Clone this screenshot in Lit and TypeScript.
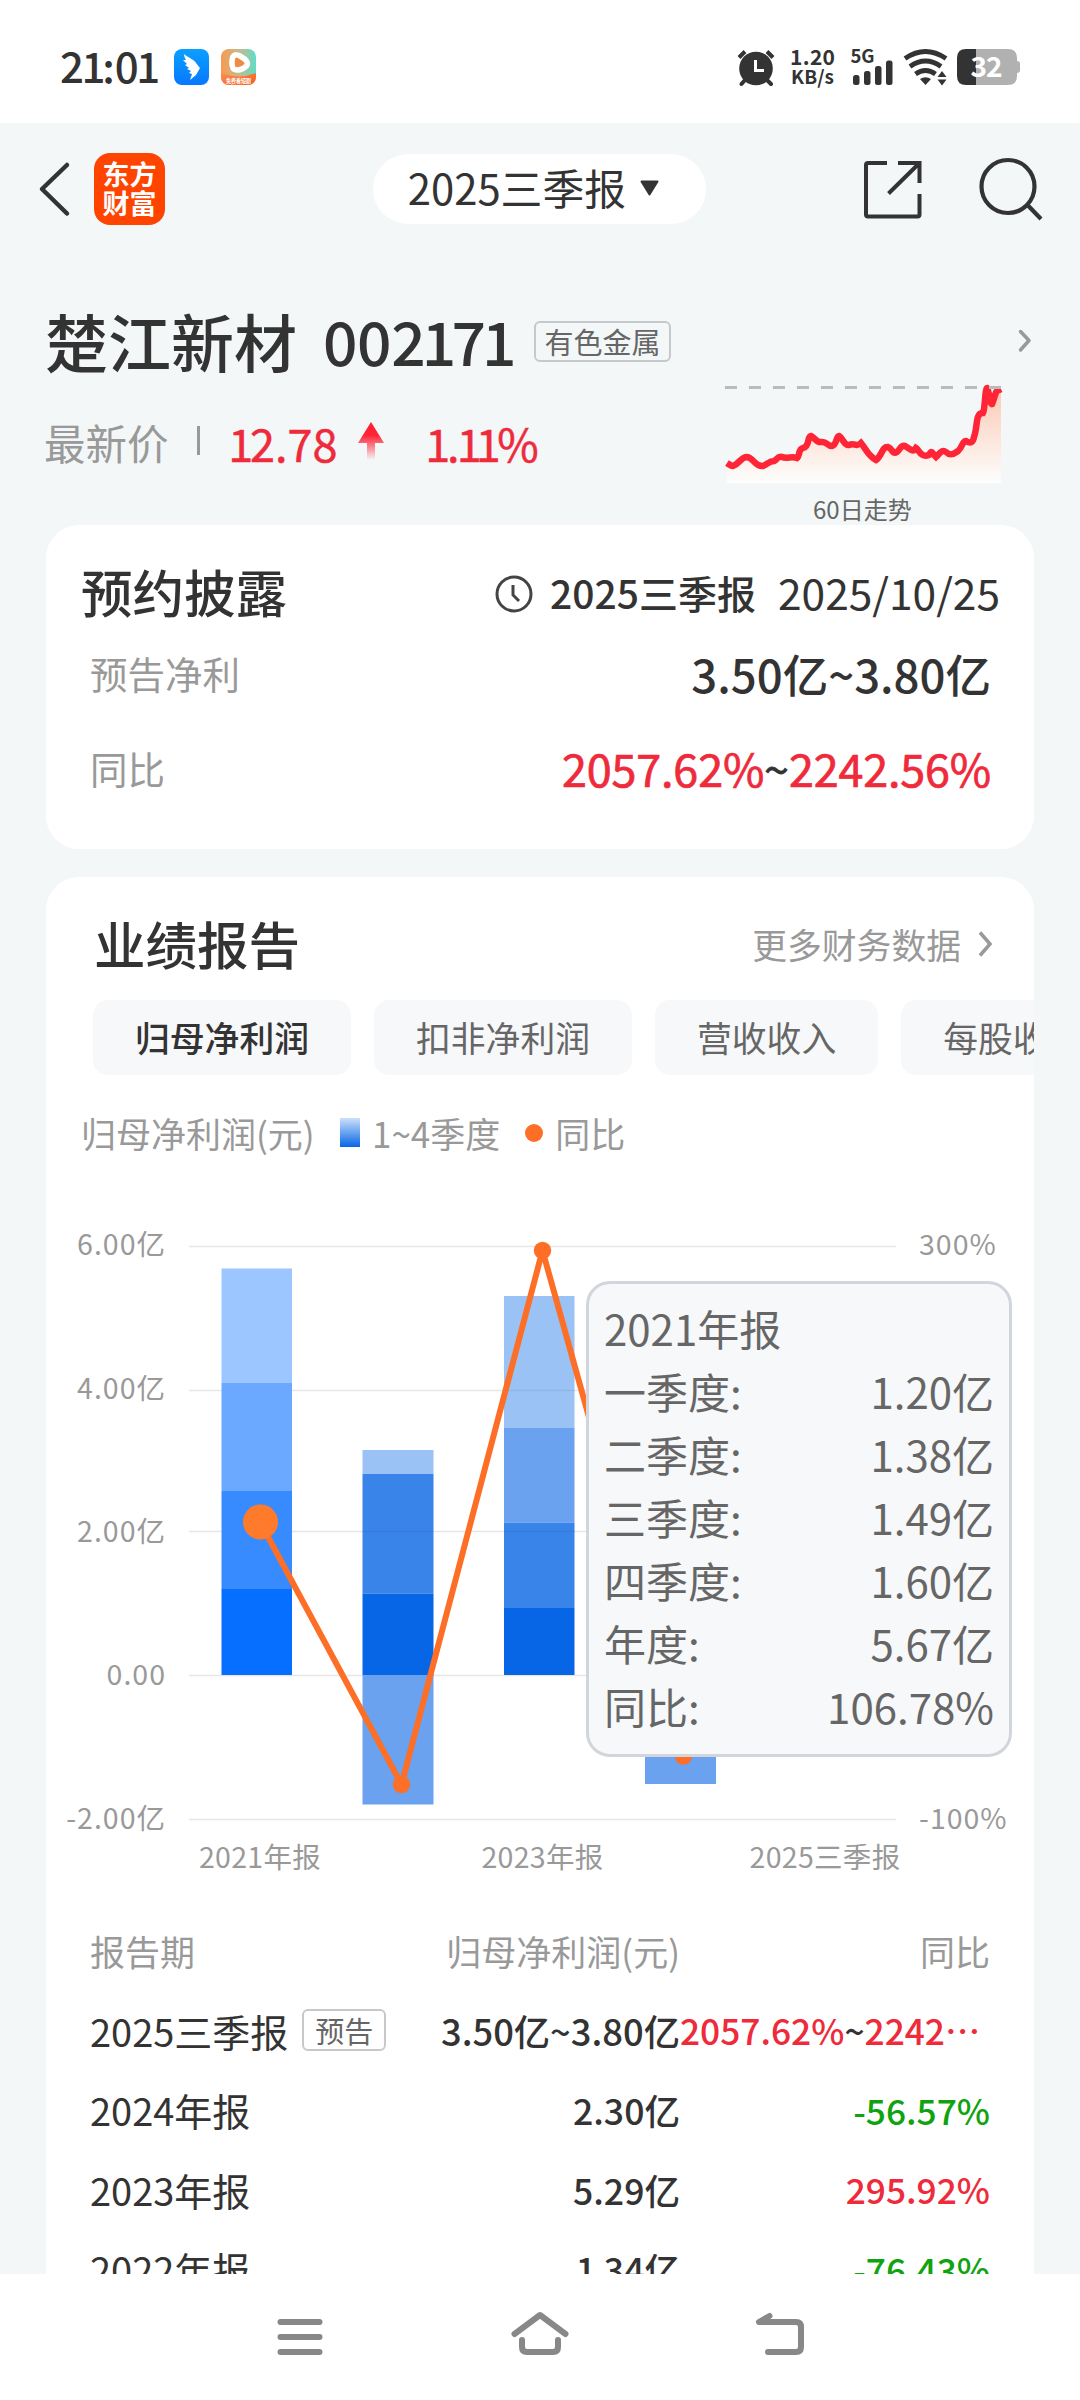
import { LitElement, html, css, svg } from "lit";
import { customElement } from "lit/decorators.js";

interface Bar { x: number; w: number; segs: [number, number, string][]; }

const bars: Bar[] = [
  { x: 221.5, w: 70.5, segs: [[1268.5, 1383, "#9cc6ff"], [1383, 1491, "#6aa9ff"], [1491, 1589, "#388bff"], [1589, 1675, "#076fff"]] },
  { x: 362.5, w: 71, segs: [[1450, 1474, "#9bc2f5"], [1474, 1593.5, "#3984e9"], [1593.5, 1675, "#0766e6"], [1675, 1804.5, "#6aa2ef"]] },
  { x: 504, w: 70.5, segs: [[1296, 1428, "#9bc2f5"], [1428, 1522.5, "#6aa2ef"], [1522.5, 1608, "#3984e9"], [1608, 1675, "#0766e6"]] },
  { x: 645, w: 71, segs: [[1675, 1784, "#6aa2ef"]] },
];
const grid = [1246.5, 1390.5, 1531.5, 1675.5, 1819.5];
const leftAxis = [["6.00亿", 1255], ["4.00亿", 1398.5], ["2.00亿", 1542], ["0.00", 1685], ["-2.00亿", 1828.5]] as const;
const quarters = [
  ["一季度:", "1.20亿"], ["二季度:", "1.38亿"], ["三季度:", "1.49亿"],
  ["四季度:", "1.60亿"], ["年度:", "5.67亿"], ["同比:", "106.78%"],
];
const rows = [
  ["2024年报", "2.30亿", "-56.57%", "down"],
  ["2023年报", "5.29亿", "295.92%", "up"],
  ["2022年报", "1.34亿", "-76.43%", "down"],
];

// Sets the digit 1 on a narrower advance than the other figures.
const fig = (s: string) => [...s].map(c => (c === "1" ? html`<span class="one">1</span>` : c));

@customElement("app-root")
export class AppRoot extends LitElement {
  static styles = css`
    :host { display: block; width: 1080px; height: 2400px; overflow: hidden; background: #f3f7f8; color: #333;
      font-family: "Noto Sans CJK SC", sans-serif; }
    * { box-sizing: border-box; }
    svg { display: block; flex: none; overflow: visible; }
    .page { display: flex; flex-direction: column; height: 2400px; }
    .up { color: #ee2a3b; }
    .down { color: #0fa30f; }
    .one { letter-spacing: -.075em; margin-left: -.06em; }
    .status { height: 123px; background: #fff; display: flex; align-items: center; padding: 11px 60px 0 60px; flex: none; }
    .time { font-size: 42px; font-weight: 500; line-height: 60px; width: 114px; white-space: nowrap; margin-top: -5px; }
    .grow { flex: 1; }
    .nav { height: 132px; display: flex; align-items: center; flex: none; padding: 0 36px 0 38px; }
    .logo { width: 71px; height: 72px; margin-left: 24px; border-radius: 16px; background: #ff4400; color: #fff; font-weight: 700;
      font-size: 27px; line-height: 29px; text-align: center; padding-top: 6px; }
    .pill { margin-left: 208px; width: 334px; height: 70px; border-radius: 35px; background: #fff; display: flex; align-items: center;
      padding-left: 35px; font-size: 41.8px; line-height: 66px; white-space: nowrap; }
    .pill span { margin-top: -4px; }
    .pill svg { margin-left: 14px; }
    .share { margin: 2px 0 0 157px; }
    .search { margin: 2px 0 0 57px; }
    .stock { height: 270px; flex: none; display: flex; padding: 0 48px 0 45px; justify-content: space-between; }
    .name { display: flex; align-items: center; height: 84px; margin-top: 42px; font-size: 63px; font-weight: 500; white-space: nowrap; }
    .code { margin-left: 26px; font-size: 60.5px; letter-spacing: -.4px; margin-top: 1px; }
    .tag { border: 2px solid #c6c9cb; border-radius: 6px; color: #666; font-weight: 400; display: flex; align-items: center; justify-content: center; }
    .industry { font-size: 29px; line-height: 36px; width: 137px; height: 41px; margin-left: auto; margin-top: 4px; }
    .ident { width: 626px; }
    .price { display: flex; align-items: center; height: 66px; margin-top: 28px; font-size: 45px; white-space: nowrap; }
    .price .up { -webkit-text-stroke: .5px #ee2a3b; }
    .plabel { font-size: 41.5px; color: #999; width: 153px; margin-left: -1px; }
    .pbar { width: 3px; height: 29px; background: #999; margin-right: 31px; margin-top: -3px; }
    .pv { width: 127px; }
    .pc { margin-left: 44px; }
    .trend { display: flex; flex-direction: column; align-items: flex-end; }
    .more { margin-top: 73px; }
    .spark { margin: 28px 30px 0 0; }
    .tl { font-size: 24px; line-height: 30px; color: #666; width: 100px; margin: 8px 119px 0 0; white-space: nowrap; }
    .card { background: #fff; width: 988px; margin-left: 46px; flex: none; }
    .book { height: 324px; border-radius: 33px; padding: 30px 34px 0 35px; }
    .line { display: flex; align-items: center; white-space: nowrap; }
    .line > span { margin-top: -5px; }
    .bh { height: 78px; }
    .line > .h { font-size: 51.5px; font-weight: 500; margin-top: -8px; }
    .period { font-size: 39px; margin: 0 22px 0 17px; font-weight: 500; }
    .date { font-size: 42.5px; }
    .k { font-size: 37.5px; color: #999; }
    .v { font-size: 45.5px; font-weight: 500; }
    .r1 { height: 84px; padding: 0 9px; }
    .r2 { height: 105px; padding: 0 9px 0 9px; }
    .r2 .v { font-size: 44.9px; font-weight: 400; letter-spacing: -.15px; -webkit-text-stroke: .7px currentColor; }
    .dark { color: #333; }
    .report { margin-top: 28px; height: 1397px; border-radius: 33px 33px 0 0; overflow: hidden; position: relative; }
    .rh { height: 123px; padding: 16px 41px 0 48px; }
    .link { font-size: 34.8px; color: #999; margin-right: 16px; }
    .rh svg { margin-top: -5px; }
    .tabs { display: flex; margin-left: 47px; gap: 23px; height: 75px; width: 1100px; }
    .tab { background: #f7f8fa; border-radius: 15px; padding: 0 42px; font-size: 34.8px; line-height: 75px; color: #666; white-space: nowrap; flex: none; }
    .on { color: #333; font-weight: 500; }
    .legend { height: 60px; margin-top: 27px; padding-left: 35px; font-size: 35px; color: #999; }
    .line > .lg { margin-top: 0; width: 233px; }
    .sq { width: 20px; height: 29px; background: linear-gradient(#cde0fa, #0766e6); margin: 1px 12px 0 26px; }
    .dot { width: 18px; height: 18px; border-radius: 9px; background: #fd6f27; margin: 1px 12px 0 25px; }
    .chart { margin-top: 38px; }
    .chart text { font-size: 28.5px; fill: #999; letter-spacing: .3px; }
    .chart .ax { letter-spacing: 1px; }
    .tip { position: absolute; left: 540px; top: 404px; width: 426px; height: 476px; border: 3px solid #d2d6dc; border-radius: 24px;
      background: #f7f8fa; color: #666; font-size: 42px; line-height: 63px; padding: 12px 15px 0 15px; }
    .tr { display: flex; justify-content: space-between; white-space: nowrap; }
    .table { padding: 21px 44px 0 44px; }
    .row { display: grid; grid-template-columns: 300px 290px 310px; height: 79.5px; align-items: center; white-space: nowrap; }
    .row > :nth-child(2), .row > :nth-child(3) { text-align: right; }
    .hd { font-size: 35px; color: #999; }
    .p { font-size: 38px; display: flex; align-items: center; }
    .n { font-size: 36.3px; font-weight: 500; }
    .short { font-size: 35.6px; }
    .g { font-size: 35.3px; font-weight: 500; margin-top: -1px; }
    .row > .clip { text-align: left; }
    .pre { font-size: 29px; width: 84px; height: 42px; margin-left: 14px; }
    .sys { flex: 1; background: #fff; }
  `;

  render() {
    return html`<div class="page">
      <div class="status">
        <span class="time">${fig("21:01")}</span>
        <svg width="84" height="36" viewBox="0 0 84 36">
          <defs>
            <linearGradient id="b" x2="0" y2="1"><stop stop-color="#0aa0ff"/><stop offset="1" stop-color="#0878ff"/></linearGradient>
            <linearGradient id="o" x2="1" y2="0"><stop stop-color="#f89a50"/><stop offset=".5" stop-color="#c9b98c"/><stop offset="1" stop-color="#5fdcc8"/></linearGradient>
            <linearGradient id="o2" x2="1" y2="1"><stop stop-color="#fb9055"/><stop offset="1" stop-color="#fb5a17"/></linearGradient>
            <clipPath id="rc"><rect x="47" width="35" height="36" rx="8"/></clipPath>
          </defs>
          <rect width="35" height="36" rx="8" fill="url(#b)"/>
          <path d="M10 5C15 9 21 11 22 14L26 19L22 26L16 31L18 25L15 24L17 22L13 20L15 19L11 16L13 15L9 11L12 11Q10 8 10 5Z" fill="#fff"/>
          <g clip-path="url(#rc)"><rect x="47" width="35" height="36" fill="url(#o)"/>
          <path d="M47 23.500Q64 31 82 24V36H47Z" fill="url(#o2)"/>
          <path d="M58.500 9Q60 4 66 7Q76 12.500 72.500 17Q66 23 59.500 20Q57 15 58.500 9Z" fill="#ee8c46" stroke="#fff" stroke-width="5.500" stroke-linejoin="round"/></g>
          <text x="52" y="33.500" font-size="6" font-weight="700" fill="#fff" textLength="25" lengthAdjust="spacingAndGlyphs">免费看短剧</text>
        </svg>
        <span class="grow"></span>
        <svg width="284" height="60" viewBox="736 37 284 60" fill="#333">
          <circle cx="756" cy="68.500" r="16.800"/><path d="M739 57.500L745 51.500M767 51.500L773 57.500" stroke="#333" stroke-width="4"/>
          <path d="M745 80L741.500 84M767 80L771 84" stroke="#333" stroke-width="4" stroke-linecap="round"/>
          <path d="M755.500 60V70.500H764" fill="none" stroke="#fff" stroke-width="3"/>
          <text x="790" y="64.500" font-size="21" font-weight="700" textLength="45">1.20</text>
          <text x="791" y="84" font-size="19" font-weight="700" textLength="43">KB/s</text>
          <text x="850.500" y="63" font-size="18.500" font-weight="700" textLength="24">5G</text>
          <rect x="853" y="75" width="6.500" height="10" rx="2.500"/><rect x="864" y="71" width="6.500" height="14" rx="2.500"/>
          <rect x="875" y="66" width="6.500" height="19" rx="2.500"/><rect x="886" y="60.500" width="6.500" height="24.500" rx="2.500"/>
          <g fill="none" stroke="#333" stroke-width="4.800"><path d="M905 58.500Q925.500 44.500 946 58.500"/><path d="M910 66.500Q925.500 55.500 941 66.500"/><path d="M915.500 74Q925.500 67 935.500 74"/></g>
          <path d="M920 79Q925.500 75.500 931 79L925.500 85ZM937.500 77L942 71L946.500 77ZM937.500 79.500H946.500L942 85.500Z"/>
          <path d="M965 49H1008Q1017 49 1017 58V61Q1020 61 1020 64V70Q1020 73 1017 73V76Q1017 85 1008 85H965Z" fill="#b1b1b1"/>
          <path d="M976 49H966Q957 49 957 58V76Q957 85 966 85H976Z"/>
          <text x="970.500" y="77" font-size="28" font-weight="700" fill="#fff" textLength="32">32</text>
        </svg>
      </div>
      <div class="nav">
        <svg width="32" height="56" viewBox="38 161 32 56"><path d="M67 165L42 189L67 213.500" fill="none" stroke="#333" stroke-width="4.500" stroke-linecap="round" stroke-linejoin="round"/></svg>
        <div class="logo">东方<br>财富</div>
        <div class="pill"><span>2025三季报</span><svg width="19" height="18" viewBox="0 0 19 18"><path d="M1.500 1.500H17.500L9.500 14.500Z" fill="#333" stroke="#333" stroke-width="2" stroke-linejoin="round"/></svg></div>
        <svg class="share" width="60" height="60" viewBox="864 160 60 60"><g fill="none" stroke="#333" stroke-width="4"><path d="M888 163H869Q867 163 867 165V214.500Q867 216.500 869 216.500H918.500Q920.500 216.500 920.500 214.500V194"/><path d="M899 163H920.500V183M920 163.500L889.500 193.500"/></g></svg>
        <svg class="search" width="64" height="66" viewBox="980 157 64 66"><g fill="none" stroke="#333" stroke-width="4.200"><circle cx="1008" cy="186.500" r="26.500"/><path d="M1027.500 205L1041 219"/></g></svg>
      </div>
      <div class="stock">
        <div class="ident">
          <div class="name"><span>楚江新材</span><span class="code">${fig("002171")}</span><span class="tag industry">有色金属</span></div>
          <div class="price"><span class="plabel">最新价</span><i class="pbar"></i><span class="pv up">${fig("12.78")}</span>
            <svg width="26" height="40" viewBox="0 0 26 40"><defs><linearGradient id="ar" x2="0" y2="1"><stop stop-color="#ff1e30"/><stop offset=".35" stop-color="#ff2436"/><stop offset="1" stop-color="#ff2436" stop-opacity="0"/></linearGradient></defs><path d="M13 0L26 21H17V38H9V21H0Z" fill="url(#ar)"/></svg>
            <span class="pc up">${fig("1.11%")}</span></div>
        </div>
        <div class="trend">
          <svg class="more" width="14" height="24" viewBox="1018 330 14 24"><path d="M1020.500 333.500L1029 342.500L1020.500 352" fill="none" stroke="#999" stroke-width="3.500" stroke-linecap="round" stroke-linejoin="round"/></svg>
          <svg class="spark" width="278" height="106" viewBox="725 380 278 106">
            <defs><linearGradient id="sp" x2="0" y2="1"><stop stop-color="#fbc9b4"/><stop offset="1" stop-color="#fdfefd"/></linearGradient></defs>
            <path d="M728 463L733 466L747 457L762 465L775 460L786 456L797 457L803 448L811 437L825 443L834 446L840 436L850 445L862 443L877 460L887 447L896 454L904 446L914 453L928 455L937 459L945 451L953 455L962 450L969 448L975 437L979 419L984 414L988 391L992 404L1000 390L1002 389V483H728Z" fill="url(#sp)"/>
            <path d="M728 463C731 465 732 466 734 466C740 464 742 457 748 457C755 458 756 467 764 466C769 464 770 461 775 461C779 459 778 456 783 457C788 459 793 456 798 458C801 456 799 449 804 448C811 447 808 436 812 436C816 438 818 443 822 442C828 441 828 446 833 446C838 445 837 436 840 436C844 438 845 446 850 445C856 442 857 448 862 443C867 449 869 456 877 460C883 456 883 446 889 447C894 449 893 455 898 452C902 448 902 445 906 446C911 449 914 453 917 448C920 450 922 458 930 455C933 449 933 453 937 457C941 453 943 449 947 452C952 457 956 453 959 451C964 447 963 441 967 441C972 444 974 442 975 437C979 426 976 413 984 413C986 410 986 388 988 388C990 390 991 405 993 404C996 398 996 390 1000 390L1002 389" fill="none" stroke="#ff2436" stroke-width="6.500"/>
            <path d="M726 387.500H1002" stroke="#b9bcbd" stroke-width="3" stroke-dasharray="12 12"/>
          </svg>
          <span class="tl">60日走势</span>
        </div>
      </div>
      <div class="card book">
        <div class="line bh"><span class="h">预约披露</span><span class="grow"></span>
          <svg width="38" height="38" viewBox="0 0 38 38" fill="none" stroke="#444" stroke-width="3"><circle cx="19" cy="19" r="17"/><path d="M18 10V20L24 26"/></svg>
          <span class="period">2025三季报</span><span class="date">2025/10/25</span></div>
        <div class="line r1"><span class="k">预告净利</span><span class="grow"></span><span class="v">3.50亿~3.80亿</span></div>
        <div class="line r2"><span class="k">同比</span><span class="grow"></span><span class="v up">2057.62%<span class="dark">~</span>2242.56%</span></div>
      </div>
      <div class="card report">
        <div class="line rh"><span class="h">业绩报告</span><span class="grow"></span><span class="link">更多财务数据</span>
          <svg width="16" height="28" viewBox="0 0 16 28"><path d="M3 2.500L13 14L3 25.500" fill="none" stroke="#999" stroke-width="3.500"/></svg></div>
        <div class="tabs"><span class="tab on">归母净利润</span><span class="tab">扣非净利润</span><span class="tab">营收收入</span><span class="tab">每股收益</span></div>
        <div class="line legend"><span class="lg">归母净利润(元)</span><i class="sq"></i>1~4季度<i class="dot"></i>同比</div>
        <svg class="chart" width="988" height="690" viewBox="46 1200 988 690">
          ${grid.map(y => svg`<path d="M189 ${y}H896" stroke="#e6e6e6" stroke-width="1.500"/>`)}
          ${bars.map(b => b.segs.map(s => svg`<rect x=${b.x} y=${s[0]} width=${b.w} height=${s[1] - s[0]} fill=${s[2]}/>`))}
          <path d="M504 1390.500H574.500M362.500 1531.500H433.500M504 1531.500H574.500" stroke="#000" stroke-opacity=".06" stroke-width="1.500"/>
          <path d="M260 1522L401.500 1784.500L542.500 1250.500L683.500 1756" fill="none" stroke="#fd6f27" stroke-width="6" stroke-linejoin="round"/>
          <circle cx="260.500" cy="1522" r="17.500" fill="#ff7a2a"/><circle cx="401.500" cy="1784.500" r="8.700" fill="#fd6f27"/>
          <circle cx="542.500" cy="1250.500" r="8.700" fill="#fd6f27"/><circle cx="683.500" cy="1756" r="8.700" fill="#fd6f27"/>
          ${leftAxis.map(l => svg`<text class="ax" x="166" y=${l[1]} text-anchor="end">${l[0]}</text>`)}
          <text class="ax" x="919" y="1255">300%</text><text class="ax" x="919" y="1828.500">-100%</text>
          <text x="260" y="1867.500" text-anchor="middle">2021年报</text><text x="542.500" y="1867.500" text-anchor="middle">2023年报</text><text x="825" y="1867.500" text-anchor="middle">2025三季报</text>
        </svg>
        <div class="table">
          <div class="row hd"><span>报告期</span><span>归母净利润(元)</span><span>同比</span></div>
          <div class="row"><span class="p">2025三季报<span class="tag pre">预告</span></span><span class="n">3.50亿~3.80亿</span><span class="g clip up">2057.62%<span class="dark">~</span>2242⋯</span></div>
          ${rows.map(r => html`<div class="row"><span class="p">${r[0]}</span><span class="n short">${fig(r[1])}</span><span class="g ${r[3]}">${r[2]}</span></div>`)}
        </div>
        <div class="tip"><div>2021年报</div>${quarters.map(q => html`<div class="tr"><span>${q[0]}</span><span>${q[1]}</span></div>`)}</div>
      </div>
      <div class="sys">
        <svg width="1080" height="126" viewBox="0 2274 1080 126" fill="none" stroke="#888" stroke-width="6" stroke-linecap="round" stroke-linejoin="round">
          <path d="M280.500 2322H319.500M280.500 2337H319.500M280.500 2352H319.500"/>
          <path d="M514.500 2334L540 2315L565.500 2334M522 2340V2347Q522 2352 527 2352H553Q558 2352 558 2347V2340"/>
          <path d="M769.500 2316L759 2322H796Q801 2322 801 2327V2347Q801 2352 796 2352H768"/>
        </svg>
      </div>
    </div>`;
  }
}
